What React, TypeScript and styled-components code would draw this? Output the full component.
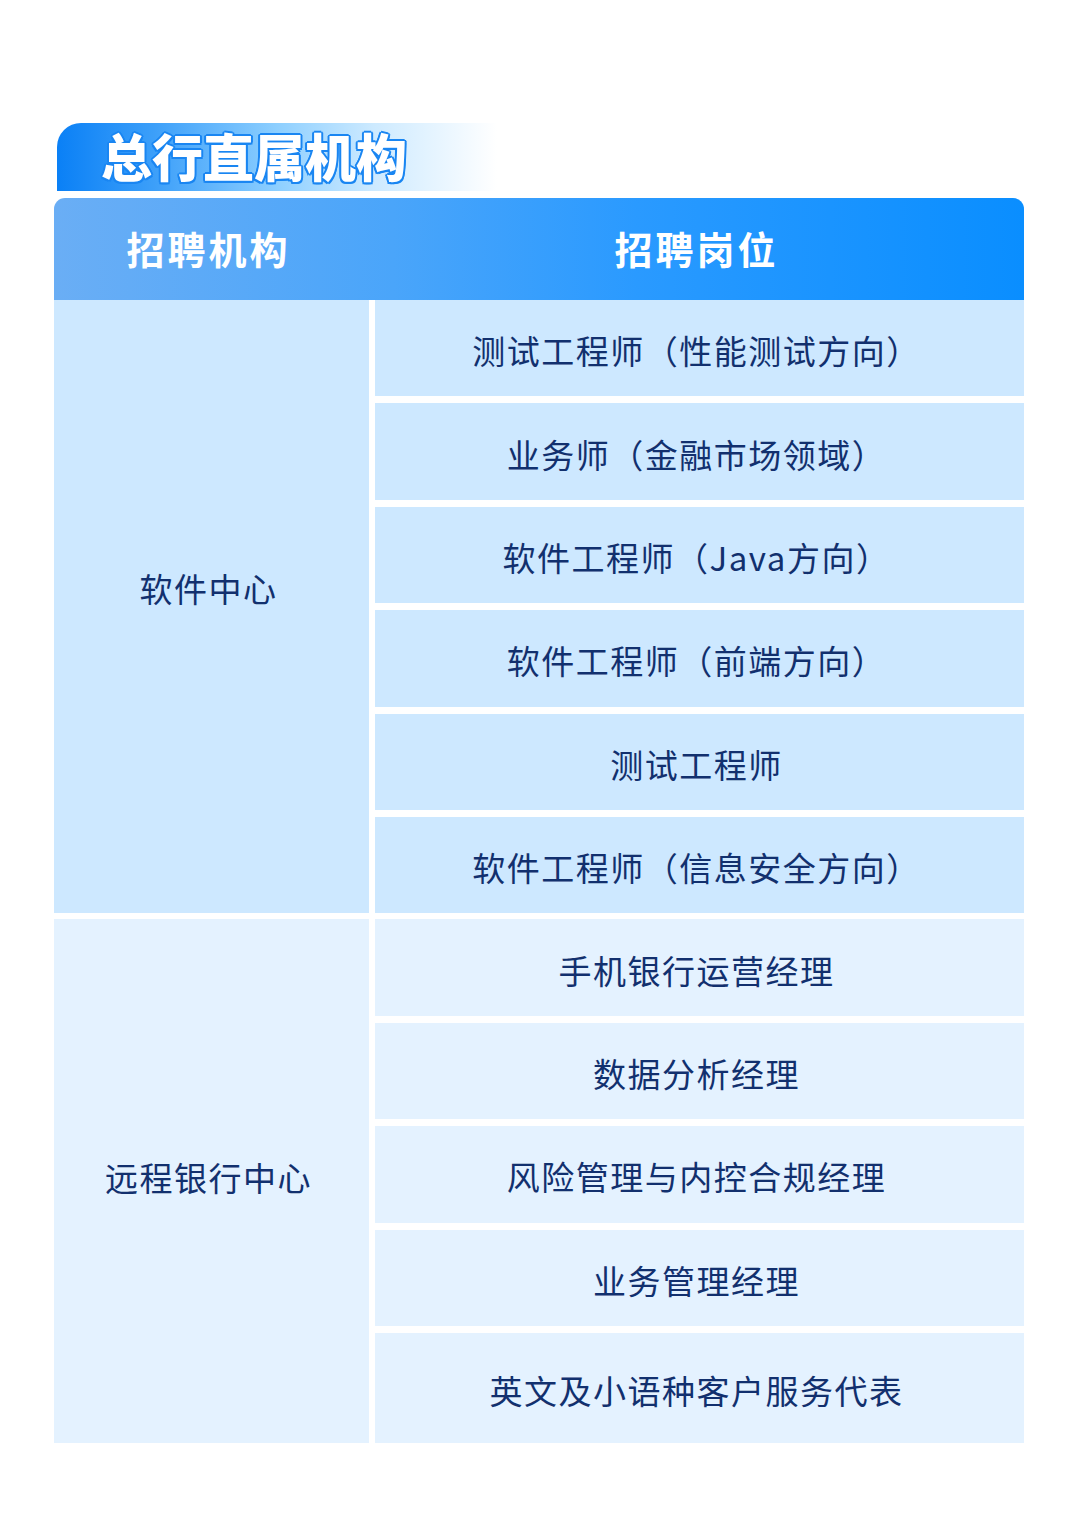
import React from "react";
import styled, { createGlobalStyle } from "styled-components";

const Global = createGlobalStyle`
  html, body { margin: 0; padding: 0; background: #ffffff; }
  body { font-family: "Noto Sans CJK SC", "Noto Sans", sans-serif; }
`;

const Page = styled.div`
  width: 1080px;
  min-height: 1535px;
  box-sizing: border-box;
  padding: 123px 56px 0 54px;
  background: #ffffff;
`;

const TitleTab = styled.div`
  width: 440px;
  height: 68px;
  margin-left: 3px;
  border-top-left-radius: 24px;
  background: linear-gradient(90deg, #0a80f6 0%, #3c9ff9 22%, #8dcfff 50%, #cdeaff 72%, #ffffff 100%);
  display: flex;
  align-items: center;
  padding-left: 44px;
  box-sizing: border-box;
`;

const TitleText = styled.h1`
  margin: 0;
  font-family: "Noto Sans CJK SC", sans-serif;
  font-weight: 900;
  font-size: 51px;
  line-height: 1;
  color: #ffffff;
  transform: translateY(-2px);
  text-shadow:
    2px 0 0 #1a86f2, -2px 0 0 #1a86f2, 0 2px 0 #1a86f2, 0 -2px 0 #1a86f2,
    1.5px 1.5px 0 #1a86f2, -1.5px 1.5px 0 #1a86f2, 1.5px -1.5px 0 #1a86f2, -1.5px -1.5px 0 #1a86f2;
`;

const Table = styled.div`
  margin-top: 7px;
  width: 970px;
  display: flex;
  flex-direction: column;
`;

const Header = styled.div`
  height: 102px;
  display: grid;
  grid-template-columns: 315px 1fr;
  column-gap: 6px;
  border-radius: 11px 11px 0 0;
  background: linear-gradient(90deg, #6aaef5 0%, #4aa5fa 35%, #2a9aff 60%, #0a8eff 100%);
`;

const HeaderCell = styled.div`
  display: flex;
  align-items: center;
  justify-content: center;
  color: #ffffff;
  font-weight: 700;
  font-size: 38px;
  letter-spacing: 3px;
  padding-bottom: 4px;
  padding-right: 6px;
`;

const Group = styled.div<{ $top: number }>`
  display: grid;
  grid-template-columns: 315px 1fr;
  column-gap: 6px;
  margin-top: ${(p) => p.$top}px;
`;

const OrgCell = styled.div<{ $bg: string; $lift: number }>`
  background: ${(p) => p.$bg};
  display: flex;
  align-items: center;
  justify-content: center;
  padding-bottom: ${(p) => p.$lift}px;
  color: #12306e;
  font-size: 33px;
  letter-spacing: 1.5px;
  padding-right: 6px;
`;

const Positions = styled.div`
  display: flex;
  flex-direction: column;
  gap: 7px;
`;

const PosRow = styled.div<{ $bg: string; $h: number }>`
  height: ${(p) => p.$h}px;
  background: ${(p) => p.$bg};
  display: flex;
  align-items: center;
  justify-content: center;
  color: #12306e;
  font-size: 33px;
  letter-spacing: 1.5px;
  padding-top: 4px;
  padding-right: 6px;
  box-sizing: border-box;
`;

type GroupData = { org: string; bg: string; lift: number; top: number; rows: string[]; lastH?: number };

const groups: GroupData[] = [
  {
    org: "软件中心",
    bg: "#cde8ff",
    lift: 38,
    top: 0,
    rows: [
      "测试工程师（性能测试方向）",
      "业务师（金融市场领域）",
      "软件工程师（Java方向）",
      "软件工程师（前端方向）",
      "测试工程师",
      "软件工程师（信息安全方向）",
    ],
  },
  {
    org: "远程银行中心",
    bg: "#e4f2ff",
    lift: 8,
    top: 6,
    rows: [
      "手机银行运营经理",
      "数据分析经理",
      "风险管理与内控合规经理",
      "业务管理经理",
      "英文及小语种客户服务代表",
    ],
    lastH: 110,
  },
];

export default function App() {
  return (
    <>
      <Global />
      <Page>
        <TitleTab>
          <TitleText>总行直属机构</TitleText>
        </TitleTab>
        <Table>
          <Header>
            <HeaderCell>招聘机构</HeaderCell>
            <HeaderCell>招聘岗位</HeaderCell>
          </Header>
          {groups.map((g) => (
            <Group key={g.org} $top={g.top}>
              <OrgCell $bg={g.bg} $lift={g.lift}>{g.org}</OrgCell>
              <Positions>
                {g.rows.map((r, i) => (
                  <PosRow
                    key={r}
                    $bg={g.bg}
                    $h={g.lastH && i === g.rows.length - 1 ? g.lastH : 96.4}
                  >
                    {r}
                  </PosRow>
                ))}
              </Positions>
            </Group>
          ))}
        </Table>
      </Page>
    </>
  );
}
